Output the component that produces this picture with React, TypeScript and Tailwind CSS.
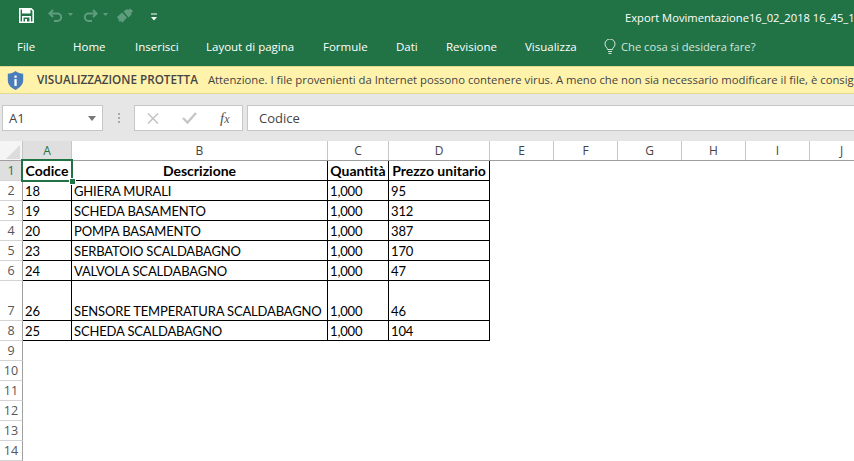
import React from "react";

const ui = { fontFamily: '"Open Sans", "Noto Sans", sans-serif' };
const cellFont = { fontFamily: 'Lato, "Open Sans", sans-serif' };

const tabs: [string, string][] = [
  ["Home", "w-[62px]"],
  ["Inserisci", "w-[71px]"],
  ["Layout di pagina", "w-[117px]"],
  ["Formule", "w-[73px]"],
  ["Dati", "w-[50px]"],
  ["Revisione", "w-[79px]"],
  ["Visualizza", "w-[79px]"],
];

const rows: { n: number; h: string; c: [string, string, string, string] }[] = [
  { n: 2, h: "h-[20px]", c: ["18", "GHIERA MURALI", "1,000", "95"] },
  { n: 3, h: "h-[20px]", c: ["19", "SCHEDA BASAMENTO", "1,000", "312"] },
  { n: 4, h: "h-[20px]", c: ["20", "POMPA BASAMENTO", "1,000", "387"] },
  { n: 5, h: "h-[20px]", c: ["23", "SERBATOIO SCALDABAGNO", "1,000", "170"] },
  { n: 6, h: "h-[20px]", c: ["24", "VALVOLA SCALDABAGNO", "1,000", "47"] },
  { n: 7, h: "h-[40px]", c: ["26", "SENSORE TEMPERATURA SCALDABAGNO", "1,000", "46"] },
  { n: 8, h: "h-[20px]", c: ["25", "SCHEDA SCALDABAGNO", "1,000", "104"] },
];

const widths = ["w-[49px]", "w-[256px]", "w-[61px]", "w-[101px]"];

function RowHead({ n, h, active }: { n: number; h: string; active?: boolean }) {
  return (
    <div
      className={`${h} w-[23px] shrink-0 flex items-end justify-center border-r border-b border-r-[#9f9f9f] border-b-[#d4d4d4] text-[12.500px] leading-[19px] ${
        active ? "bg-[#dfdfdf] text-[#217346]" : "bg-white text-[#555]"
      }`}
      style={ui}
    >
      {n}
    </div>
  );
}

export default function App() {
  return (
    <div className="relative w-[854px] h-[461px] overflow-hidden bg-white" style={ui}>
      {/* Title bar + ribbon tabs */}
      <div className="h-[66px] bg-[#217346] text-white flex flex-col">
        <div className="h-[30px] flex items-center pl-[19px] shrink-0">
          <svg width="15" height="15" viewBox="0 0 15 15" className="mr-[14px]">
            <path d="M.8.8h11.400l2 2v11.400H.8z" fill="none" stroke="#fff" strokeWidth="1.600" />
            <rect x="3" y="1" width="8.500" height="4.500" fill="#fff" />
            <path d="M3.800 14V8.800h7.400V14" fill="none" stroke="#fff" strokeWidth="1.500" />
            <rect x="6" y="11" width="2" height="3" fill="#fff" />
          </svg>
          <svg width="15" height="13" viewBox="0 0 15 13" className="mr-[4px]" fill="none" stroke="#5f9d7e" strokeWidth="2">
            <path d="M5 1 1.500 4.500 5 8" />
            <path d="M2 4.500h7.500a3.700 3.700 0 0 1 0 7.400H6" />
          </svg>
          <svg width="7" height="4" viewBox="0 0 7 4" className="mr-[9px]"><path d="M1 0h5L3.500 3z" fill="#5f9d7e" /></svg>
          <svg width="15" height="13" viewBox="0 0 15 13" className="mr-[4px]" fill="none" stroke="#5f9d7e" strokeWidth="2">
            <path d="M10 1l3.500 3.500L10 8" />
            <path d="M13 4.500H5.500a3.700 3.700 0 0 0 0 7.400H9" />
          </svg>
          <svg width="7" height="4" viewBox="0 0 7 4" className="mr-[8px]"><path d="M1 0h5L3.500 3z" fill="#5f9d7e" /></svg>
          <svg width="17" height="15" viewBox="0 0 17 15" className="mr-[16px]" fill="#5f9d7e">
            <path d="M0 9l5-4.500 5 5-4.500 5-1.500-1.500-1 1-1.500-1.500 1-1.500-1 .5z" />
            <path d="M6.500 3.500 10 1l1 1 2-1.500 3 2.500-2 2.500.5 1-3 3z" />
          </svg>
          <svg width="8" height="8" viewBox="0 0 8 8" fill="#fff" className="mt-[4px]">
            <rect x="1" y="0.500" width="6" height="1" />
            <path d="M1 4h6L4 7.500z" />
          </svg>
          <span className="ml-auto text-[11.200px] whitespace-nowrap mr-[-60px] w-[289px] mt-[6px]">
            Export Movimentazione16_02_2018 16_45_12
          </span>
        </div>
        <div className="h-[36px] flex items-start text-[11.500px] leading-[30px] pt-[2px]">
          <span className="w-[73px] pl-[17px]">File</span>
          <div className="flex">
            {tabs.map(([t, w]) => (
              <span key={t} className={`${w} text-left whitespace-nowrap`}>{t}</span>
            ))}
          </div>
          <svg width="12" height="16" viewBox="0 0 12 16" fill="none" stroke="#d5e5dc" strokeWidth="1" className="mt-[7px] mr-[5px]">
            <path d="M3.500 10.500C3.500 8.500 1 8 1 5a5 5 0 0 1 10 0c0 3-2.500 3.500-2.500 5.500z" />
            <path d="M4 12.500h4M4.500 14.500h3" />
          </svg>
          <span className="text-[#d5e5dc] text-[11.200px] whitespace-nowrap">Che cosa si desidera fare?</span>
        </div>
      </div>

      {/* Protected view bar */}
      <div className="h-[28px] bg-[#fff2ab] border-y border-y-[#e3d98f] flex items-center pl-[7px] text-[#444] whitespace-nowrap overflow-hidden">
        <svg width="17" height="19" viewBox="0 0 18 21" className="shrink-0 mr-[13px]">
          <path d="M9 0c2.500 2 5.500 3 8.500 3v7c0 5-3.500 8.500-8.500 11C3.500 18.500.5 15 .5 10V3C3.500 3 6.500 2 9 0z" fill="#4a7ebb" />
          <rect x="7.800" y="5" width="2.500" height="2.500" fill="#fff" />
          <rect x="7.800" y="9" width="2.500" height="7.500" fill="#fff" />
        </svg>
        <span className="font-semibold text-[11.700px] mr-[10px]">VISUALIZZAZIONE PROTETTA</span>
        <span className="text-[11.300px]">Attenzione. I file provenienti da Internet possono contenere virus. A meno che non sia necessario modificare il file, è consigliabile rimanere in Visualizzazione protetta.</span>
      </div>

      {/* Formula bar */}
      <div className="h-[47px] bg-[#e6e6e6] flex items-start pt-[11px] pl-[2px]">
        <div className="w-[101px] h-[26px] bg-white border border-[#c6c6c6] flex items-center justify-between pl-[6px] pr-[6px] pt-[1px] text-[13px] text-[#444]">
          <span>A1</span>
          <svg width="8" height="5" viewBox="0 0 8 5"><path d="M0 0h8L4 5z" fill="#777" /></svg>
        </div>
        <div className="w-[31px] h-[26px] flex flex-col items-center justify-center gap-[2px]">
          <span className="w-[2px] h-[2px] bg-[#aaa]" />
          <span className="w-[2px] h-[2px] bg-[#aaa]" />
          <span className="w-[2px] h-[2px] bg-[#aaa]" />
        </div>
        <div className="w-[109px] h-[26px] bg-white border border-[#c6c6c6] flex items-center shrink-0">
          <svg width="12" height="11" viewBox="0 0 12 11" className="ml-[12px]" stroke="#c6c6c6" strokeWidth="1.600" fill="none"><path d="M1 .5l10 10M11 .5 1 10.500" /></svg>
          <svg width="15" height="12" viewBox="0 0 15 12" className="ml-[23px]" stroke="#c6c6c6" strokeWidth="2.400" fill="none"><path d="M1 6l4.500 4.500L14 1" /></svg>
          <span className="ml-[23px] text-[15px] italic text-[#555] leading-none" style={{ fontFamily: '"Liberation Serif", serif' }}>f<span className="text-[12px]">x</span></span>
        </div>
        <div className="w-[4px] shrink-0" />
        <div className="flex-1 h-[26px] bg-white border-y border-l border-[#c6c6c6] flex items-center pl-[11px] pt-[1px] text-[13px] text-[#444]">Codice</div>
      </div>

      {/* Sheet */}
      <div className="relative">
        {/* Column headers */}
        <div className="flex h-[19px] bg-white border-b border-b-[#9f9f9f] box-content text-[12px] text-[#444]">
          <div className="w-[23px] shrink-0 relative bg-[#f5f5f5] border-r border-r-[#c6c6c6]">
            <svg width="14" height="14" viewBox="0 0 14 14" className="absolute right-[2px] bottom-[1px]"><path d="M14 0v14H0z" fill="#dcdcdc" /></svg>
          </div>
          {[
            ["A", "w-[49px] bg-[#dfdfdf] text-[#217346]"],
            ["B", "w-[256px]"],
            ["C", "w-[61px]"],
            ["D", "w-[101px]"],
            ["E", "w-[64px]"],
            ["F", "w-[64px]"],
            ["G", "w-[64px]"],
            ["H", "w-[64px]"],
            ["I", "w-[64px]"],
            ["J", "w-[64px]"],
          ].map(([l, c]) => (
            <div key={l} className={`${c} shrink-0 flex items-center justify-center border-r border-r-[#c6c6c6]`}>{l}</div>
          ))}
        </div>

        {/* Row 1 */}
        <div className="flex">
          <RowHead n={1} h="h-[20px]" active />
          <div className="flex border-b border-b-black text-[14px] font-bold text-black" style={cellFont}>
            {["Codice", "Descrizione", "Quantità", "Prezzo unitario"].map((t, i) => (
              <div key={t} className={`${widths[i]} h-[19px] border-r border-r-black flex items-end justify-center leading-[19px] whitespace-nowrap`}>{t}</div>
            ))}
          </div>
        </div>

        {/* Data rows */}
        {rows.map((r) => (
          <div key={r.n} className="flex">
            <RowHead n={r.n} h={r.h} />
            <div className="flex border-b border-b-black text-[13px] tracking-[-0.160px] text-black" style={cellFont}>
              {r.c.map((t, i) => (
                <div key={i} className={`${widths[i]} border-r border-r-black flex items-end pl-[2px] leading-[17px] whitespace-nowrap`}>{t}</div>
              ))}
            </div>
          </div>
        ))}

        {/* Empty rows */}
        {[9, 10, 11, 12, 13, 14].map((n) => (
          <RowHead key={n} n={n} h="h-[20px]" />
        ))}

        {/* Selection */}
        <div className="absolute left-[21px] top-[18px] w-[52px] h-[23px] border-2 border-[#217346] pointer-events-none">
          <div className="absolute right-[-5px] bottom-[-5px] w-[7px] h-[7px] bg-[#217346] border border-white" />
        </div>
      </div>
    </div>
  );
}
